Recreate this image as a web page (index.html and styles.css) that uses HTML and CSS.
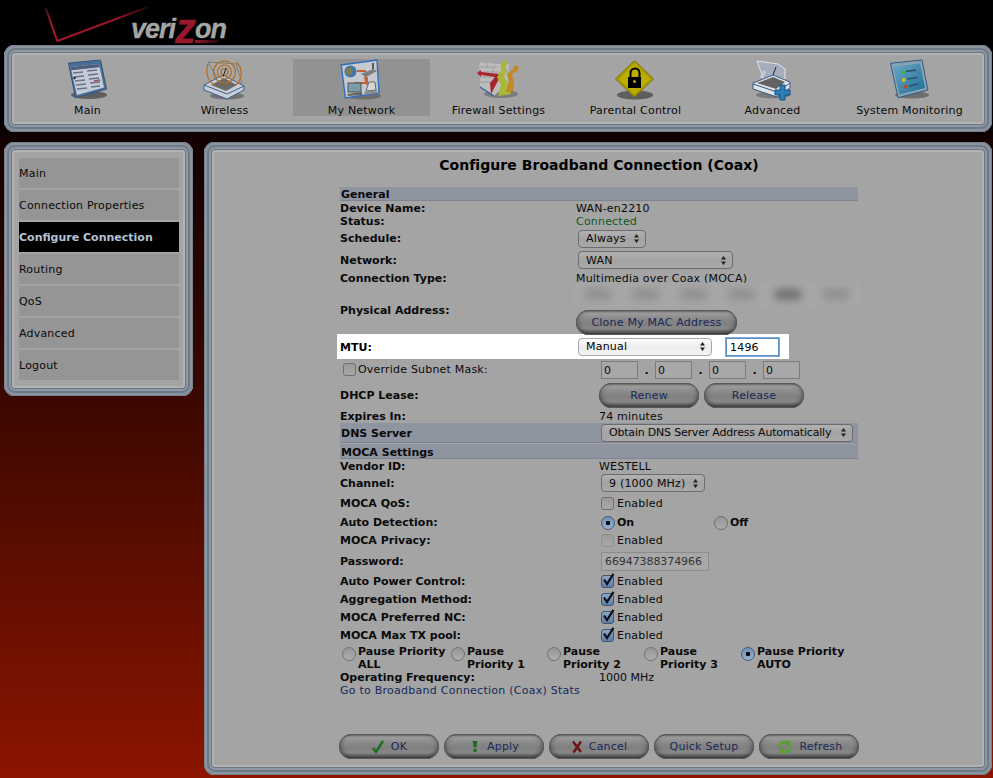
FILE: index.html
```html
<!DOCTYPE html>
<html lang="en">
<head>
<meta charset="utf-8">
<title>Configure Broadband Connection (Coax)</title>
<link rel="stylesheet" href="styles.css">
</head>
<body>
<svg class="defs" width="0" height="0" aria-hidden="true">
  <defs>
    <symbol id="updn" viewBox="0 0 7 11"><path d="M3.5 1 6 4.4H1zM3.5 10 1 6.6h5z" fill="#222"/></symbol>
    <symbol id="tick" viewBox="0 0 14 14"><path d="M3 6.5 6 11 12.5 .8" fill="none" stroke="#0c0f14" stroke-width="2.2"/></symbol>
    <linearGradient id="skyblue" x1="0" y1="0" x2="1" y2="1"><stop offset="0" stop-color="#6ba7c4"/><stop offset="1" stop-color="#1f6f96"/></linearGradient>
    <linearGradient id="vg" gradientUnits="userSpaceOnUse" x1="13" y1="41" x2="104" y2="7"><stop offset="0" stop-color="#a0162c"/><stop offset=".65" stop-color="#97162a"/><stop offset="1" stop-color="#1a0808"/></linearGradient>
    <linearGradient id="vl" gradientUnits="userSpaceOnUse" x1="13" y1="41" x2="1.700" y2="8"><stop offset="0" stop-color="#a0162c"/><stop offset=".6" stop-color="#97162a"/><stop offset="1" stop-color="#2a1010"/></linearGradient>
  </defs>
</svg>
<header class="brand">
  <svg class="chevron" width="106" height="45" viewBox="0 0 106 45"><path d="M1.700 8 13.300 41" fill="none" stroke="url(#vl)" stroke-width="2.200"/><path d="M12.600 41.200 104 7" fill="none" stroke="url(#vg)" stroke-width="2.200"/></svg>
  <div class="word">veri<span class="zed">z</span>on</div>
</header>

<nav class="frame topnav">
  <a class="tab">
    <svg width="44" height="42" viewBox="0 0 44 42"><ellipse cx="23" cy="36" rx="18" ry="4" fill="#5f5f5f"/><path d="M2.5 4 34.5 1 40.5 30 9.5 39Z" fill="#4a6f97" stroke="#33557c"/><path d="M4.5 8 33 5 38 28.5 11 36Z" fill="#c5cbd6"/><path d="M4.5 8 33 5 33.7 8.3 5.2 11.3Z" fill="#4f5e80"/><path d="M7 14 17 13M8 18 18 17M9 22 19 21M10 26 20 25M11 30 21 29M21 12 31 11M22 16 32 15M23 20 33 19M24 24 34 23M25 28 34 27" stroke="#68728a" stroke-width="1.4"/><circle cx="8.5" cy="19" r="1.2" fill="#222"/><path d="M28 22 34 21" stroke="#a05050" stroke-width="1.4"/></svg>
    <span>Main</span>
  </a>
  <a class="tab">
    <svg width="44" height="42" viewBox="0 0 44 42"><ellipse cx="24" cy="37" rx="17" ry="3.5" fill="#727272"/><path d="M5 3 33 5 39 24 19 27Z" fill="#a9a9a9" stroke="#7d7d7d"/><path d="M1 26 20 16 41 27 41 31 24 40 1 31Z" fill="#c9ced6" stroke="#3a5f8f"/><path d="M1 26 24 35 41 27" fill="none" stroke="#3a5f8f"/><path d="M8 26 21 19 34 26 23 32Z" fill="#6a6a6a"/><g fill="none" stroke="#b86b1e" stroke-width="1.2"><circle cx="21.5" cy="13" r="3.5"/><circle cx="21.5" cy="13" r="7"/><circle cx="21.5" cy="13" r="11"/><path d="M5 5C2 14 5 23 13 27M33 3C40 9 40 19 33 26"/></g><path d="M20 18 23 9" stroke="#222"/></svg>
    <span>Wireless</span>
  </a>
  <a class="tab active">
    <svg width="44" height="42" viewBox="0 0 44 42"><ellipse cx="24" cy="37" rx="17" ry="3.5" fill="#6d6d6d"/><path d="M1.2 6 37 1 39 34 5.500 39Z" fill="#c4c9cf" stroke="#2f6fc0" stroke-width="1.4"/><path d="M17 12H26M25 17 26 24 15 24 15 26M27 18V26" fill="none" stroke="#c4602f" stroke-width="1.8"/><circle cx="10.500" cy="12.500" r="6" fill="#3b77a9"/><path d="M6 10C8 8 11 8 12 10S13 14 10 16 6 14 6 10Z" fill="#7f7f4f"/><path d="M21 15 33 10 37 12 26 18Z" fill="#7d7d7d"/><path d="M33 4V10" stroke="#333" stroke-width="1.500"/><rect x="8" y="24" width="13" height="9" fill="#7b9ba6" stroke="#555"/><path d="M7 35 22 33 22 36 8 37Z" fill="#666"/><path d="M26 32 29 23 35 23 36 31Z" fill="#d5d5d5" stroke="#666"/><path d="M24 33 37 31 37 34 25 36Z" fill="#8b8b8b"/></svg>
    <span>My Network</span>
  </a>
  <a class="tab">
    <svg width="44" height="42" viewBox="0 0 44 42"><ellipse cx="24" cy="35" rx="17" ry="4" fill="#7d7d7d"/><path d="M2.500 3 20 5 32 5 31 24 17 37 3 28Z" fill="#bcbcbc"/><path d="M3 8H20M3 13H22M3 18H18M3 23H14M10 3V8M16 8V13M8 13V18M25 5V12M30 10V16" stroke="#9c9c9c"/><path d="M3 28 17 37" stroke="#3a62a0" stroke-width="1.400"/><path d="M14 35 22 20 22 15 4 13 4 11 0 14 4 18 4 16 18 18 13 24Z" fill="#a9242c"/><path d="M21 37 24 26 20 18 25 10 23 8 27 0 31 6 29 6 29 12 27 18 31 24 34 35Z" fill="#a9b936"/><path d="M29 33 32 22 30 15 37 9 36 7 42 7 40 14 39 12 35 15 37 24 36 32Z" fill="#c08a26"/></svg>
    <span>Firewall Settings</span>
  </a>
  <a class="tab">
    <svg width="44" height="42" viewBox="0 0 44 42"><ellipse cx="21" cy="36" rx="18" ry="4.500" fill="#5e5e5e"/><path d="M20.500 1.500 39.500 20 20.500 38 1.500 20Z" fill="#a99c00" stroke="#7f7600"/><path d="M20.500 4.500 36 20 20.500 35 5 20Z" fill="#bcae00"/><path d="M16.500 18V14A4.500 4.500 0 0 1 25.500 14V18" fill="none" stroke="#000" stroke-width="2"/><rect x="14" y="18" width="13" height="11" fill="#000"/><circle cx="20.500" cy="22.500" r="1.500" fill="#b8a800"/></svg>
    <span>Parental Control</span>
  </a>
  <a class="tab">
    <svg width="44" height="42" viewBox="0 0 44 42"><ellipse cx="22" cy="36" rx="17" ry="3.500" fill="#7a7a7a"/><path d="M6 2 27 5 34 10 34 20 13 21Z" fill="#a4aebc" stroke="#e0e4ea"/><path d="M14 12 10 19" stroke="#c3ccd7" stroke-width="3"/><path d="M25 8 22 16" stroke="#222"/><path d="M2 24 22 16 39 23 39 29 26 38 2 30Z" fill="#dfe3e8" stroke="#36588a"/><path d="M6 24 22 18 34 23 25 30Z" fill="#626262"/><path d="M2 25 26 33 39 24" fill="none" stroke="#36588a"/><path d="M29 26H34V31H39V36H34V41H29V36H24V31H29Z" fill="#2b7fb5" stroke="#0f5289"/></svg>
    <span>Advanced</span>
  </a>
  <a class="tab">
    <svg width="44" height="42" viewBox="0 0 44 42"><ellipse cx="24" cy="36" rx="17" ry="3.500" fill="#6e6e6e"/><path d="M2.500 4.300 34 1 39.800 31 10 38.700Z" fill="#8aa2b4" stroke="#335a82"/><path d="M5 7.500 32 4.500 37 29 11.500 35.500Z" fill="url(#skyblue)"/><circle cx="14.800" cy="13.300" r="1.900" fill="#39b24a"/><circle cx="15.800" cy="21" r="1.900" fill="#cfc41f"/><circle cx="17.500" cy="27.700" r="1.900" fill="#c4472b"/><path d="M18 12.500 28 11M19 20 29 18.500M21 27 30 25" stroke="#2a4f66" stroke-width="1.500"/></svg>
    <span>System Monitoring</span>
  </a>
</nav>

<div class="lower">
  <aside class="frame side">
    <a class="side-item">Main</a>
    <a class="side-item">Connection Properties</a>
    <a class="side-item current">Configure Connection</a>
    <a class="side-item">Routing</a>
    <a class="side-item">QoS</a>
    <a class="side-item">Advanced</a>
    <a class="side-item">Logout</a>
  </aside>

  <main class="frame content">
    <h1>Configure Broadband Connection (Coax)</h1>
    <form class="form">
      <div class="bar h14 after1">General</div>
      <div class="row h13"><b class="lab">Device Name:</b><span>WAN-en2210</span></div>
      <div class="row h13"><b class="lab">Status:</b><span class="ok">Connected</span></div>
      <div class="row h21"><b class="lab">Schedule:</b><span class="sel s-sched">Always<svg class="ud"><use href="#updn"/></svg></span></div>
      <div class="row h22"><b class="lab">Network:</b><span class="sel s-net">WAN<svg class="ud"><use href="#updn"/></svg></span></div>
      <div class="row h14"><b class="lab">Connection Type:</b><span>Multimedia over Coax (MOCA)</span></div>
      <div class="row h49"><b class="lab low">Physical Address:</b>
        <div class="mac">
          <div class="blurbox"><i></i><i></i><i></i><i></i><i class="dk"></i><i></i></div>
          <span class="pill p-clone">Clone My MAC Address</span>
        </div>
      </div>
      <div class="row h25 mtu"><b class="lab low">MTU:</b><span class="sel s-mtu">Manual<svg class="ud"><use href="#updn"/></svg></span><span class="inp focus">1496</span></div>
      <div class="row h22"><label class="lab ovr"><span class="cb"></span>Override Subnet Mask:</label>
        <div class="ip"><span class="inp">0</span><b>.</b><span class="inp">0</span><b>.</b><span class="inp">0</span><b>.</b><span class="inp">0</span></div>
      </div>
      <div class="row h28"><b class="lab w259">DHCP Lease:</b><div class="dhcp"><span class="pill p-mid">Renew</span><span class="pill p-mid">Release</span></div></div>
      <div class="row h14"><b class="lab w259">Expires In:</b><span>74 minutes</span></div>
      <div class="bar h20 dns"><span class="w259 dns-t">DNS Server</span><span class="sel s-dns">Obtain DNS Server Address Automatically<svg class="ud"><use href="#updn"/></svg></span></div>
      <div class="bar h14 gap1">MOCA Settings</div>
      <div class="row h14"><b class="lab w259">Vendor ID:</b><span>WESTELL</span></div>
      <div class="row h20"><b class="lab w261">Channel:</b><span class="sel s-chan">9 (1000 MHz)<svg class="ud"><use href="#updn"/></svg></span></div>
      <div class="row h19 dn"><b class="lab w261">MOCA QoS:</b><span class="cb"></span><span class="en">Enabled</span></div>
      <div class="row h19 dn"><b class="lab w261">Auto Detection:</b><span class="rd on"></span><b class="opt opt-on">On</b><span class="rd"></span><b class="opt">Off</b></div>
      <div class="row h19"><b class="lab w261">MOCA Privacy:</b><span class="cb dis"></span><span class="en">Enabled</span></div>
      <div class="row h21 dn"><b class="lab w261">Password:</b><span class="inp pw">66947388374966</span></div>
      <div class="row h19 dn"><b class="lab w261">Auto Power Control:</b><span class="cb chk"><svg class="tk"><use href="#tick"/></svg></span><span class="en">Enabled</span></div>
      <div class="row h18"><b class="lab w261">Aggregation Method:</b><span class="cb chk"><svg class="tk"><use href="#tick"/></svg></span><span class="en">Enabled</span></div>
      <div class="row h18"><b class="lab w261">MOCA Preferred NC:</b><span class="cb chk"><svg class="tk"><use href="#tick"/></svg></span><span class="en">Enabled</span></div>
      <div class="row h18"><b class="lab w261">MOCA Max TX pool:</b><span class="cb chk"><svg class="tk"><use href="#tick"/></svg></span><span class="en">Enabled</span></div>
      <div class="pauses">
        <div class="pz z1"><span class="rd"></span><b>Pause Priority<br>ALL</b></div>
        <div class="pz z3"><span class="rd"></span><b>Pause<br>Priority 1</b></div>
        <div class="pz z2"><span class="rd"></span><b>Pause<br>Priority 2</b></div>
        <div class="pz z2"><span class="rd"></span><b>Pause<br>Priority 3</b></div>
        <div class="pz"><span class="rd on"></span><b>Pause Priority<br>AUTO</b></div>
      </div>
      <div class="row h13"><b class="lab w259">Operating Frequency:</b><span class="tight">1000 MHz</span></div>
      <div class="row h13"><a class="statlink">Go to Broadband Connection (Coax) Stats</a></div>
    </form>
    <div class="actions">
      <span class="pill act"><svg width="14" height="14" viewBox="0 0 14 14"><path d="M2 8 5 12 12 1" fill="none" stroke="#19721b" stroke-width="2.400"/></svg>OK</span>
      <span class="pill act"><svg width="12" height="14" viewBox="0 0 12 14"><path d="M3.500 1H8.500L7.300 7.500H4.700ZM4.500 9H7.500V12H4.500Z" fill="#1b6d1b"/></svg>Apply</span>
      <span class="pill act"><svg width="12" height="14" viewBox="0 0 12 14"><path d="M2 1.500 10 12M10 1.500 2.500 12.500" fill="none" stroke="#6f1414" stroke-width="2.400"/></svg>Cancel</span>
      <span class="pill act">Quick Setup</span>
      <span class="pill act"><svg width="18" height="18" viewBox="0 0 18 18"><path d="M2 9A7 7 0 0 1 13 3.500L14.500 2 15 8 9.500 7.500 11 6A4 4 0 0 0 5 9ZM16 9A7 7 0 0 1 5 14.500L3.500 16 3 10 8.500 10.500 7 12A4 4 0 0 0 13 9Z" fill="#5d9c37"/></svg>Refresh</span>
    </div>
  </main>
</div>
</body>
</html>
```

FILE: styles.css
```css
* { box-sizing: border-box; }
html, body { margin: 0; height: 100%; }
body {
  width: 993px;
  height: 778px;
  overflow: hidden;
  font: 11px/13px "DejaVu Sans", Verdana, sans-serif;
  letter-spacing: .2px;
  color: #0a0a0a;
  background: linear-gradient(#000 0, #000 120px, #120100 140px, #3b0800 400px, #8c1500 778px);
}
b { letter-spacing: 0; }
.defs { position: absolute; }

/* Brand */
.brand { height: 45px; display: flex; }
.chevron { margin-left: 44px; flex: none; }
.word {
  margin: 14px 0 0 -19px;
  font: italic bold 27px/30px "Liberation Sans", Arial, sans-serif;
  color: #a6a6a6;
  letter-spacing: -1px;
  -webkit-text-stroke: .3px #a6a6a6;
  white-space: nowrap;
}
.zed {
  position: relative;
  color: #97182c;
  -webkit-text-stroke: .3px #97182c;
  font-size: 42px;
  line-height: 0;
  vertical-align: -5px;
}
.zed::after {
  content: "";
  position: absolute;
  left: 20px;
  bottom: 9px;
  width: 24px;
  height: 3px;
  background: linear-gradient(90deg, #97182c, #1a0606);
}

/* Frames */
.frame {
  background: #a4a4a4;
  border-radius: 11px;
  box-shadow:
    inset 0 0 0 1px #77818c,
    inset 0 0 0 3px #8a95a1,
    inset 0 0 0 5px #6f7a87,
    inset 0 0 0 7px #8d98a4,
    inset 0 0 0 8px #6c7784,
    inset 0 0 0 10px #b2b2b2;
}

/* Top navigation */
.topnav {
  height: 87px;
  margin: 0 1px 0 4px;
  padding: 14px 0 0 15px;
  display: flex;
}
.tab {
  width: 137px;
  height: 57px;
  flex: none;
  display: flex;
  flex-direction: column;
  align-items: center;
}
.tab svg { flex: none; display: block; }
.tab span { margin-top: 3px; line-height: 13px; white-space: nowrap; }
.tab.active { background: #929292; }

/* Lower */
.lower { display: flex; margin: 10px 1px 0 4px; align-items: flex-start; gap: 11px; }
.side {
  width: 189px;
  height: 254px;
  flex: none;
  padding: 16px 14px 0 15px;
  display: flex;
  flex-direction: column;
  gap: 2px;
}
.side-item {
  height: 30px;
  background: #959595;
  line-height: 32px;
  white-space: nowrap;
}
.side-item.current { background: #000; color: #b4c1d0; font-weight: bold; letter-spacing: 0; }

.content {
  flex: 1;
  height: 633px;
  padding: 15px 0 0 136px;
  display: flex;
  flex-direction: column;
}
h1 {
  margin: 0 0 14px;
  font-size: 14px;
  line-height: 16px;
  font-weight: bold;
  letter-spacing: .05px;
  width: 518px;
  text-align: center;
  white-space: nowrap;
  color: #000;
}
.form { width: 518px; }

/* Rows */
.h13 { height: 13px; }
.h14 { height: 14px; }
.h18 { height: 18px; }
.h19 { height: 19px; }
.h20 { height: 20px; }
.h21 { height: 21px; }
.h22 { height: 22px; }
.h25 { height: 25px; }
.h28 { height: 28px; }
.h49 { height: 49px; }

.row { display: flex; align-items: center; white-space: nowrap; }
.dn { padding-top: 2px; }
.lab { width: 236px; flex: none; font-weight: bold; letter-spacing: 0; }
.low { padding-top: 2px; }
.w259 { width: 259px; flex: none; }
.w261 { width: 261px; flex: none; }
.ok { color: #0c5a1c; }
.tight { letter-spacing: 0; }

.bar {
  background: #8f94a1;
  border-bottom: 1px solid #7f8490;
  font-weight: bold;
  letter-spacing: 0;
  padding: 1px 0 0 1px;
  line-height: 13px;
  display: flex;
  align-items: flex-start;
}
.after1 { margin-bottom: 1px; }
.gap1 { margin-top: 1px; height: 15px; padding-top: 2px; }
.dns { padding: 0 0 0 1px; align-items: center; }
.dns-t { width: 260px; padding-top: 2px; }

/* Controls */
.sel {
  display: flex;
  align-items: center;
  justify-content: space-between;
  height: 18px;
  margin-left: 2px;
  padding: 0 5px 0 7px;
  border: 1px solid #6c6c6c;
  border-radius: 4px;
  background: linear-gradient(#b1b1b1, #a3a3a3 50%, #a8a8a8);
  font-weight: normal;
  letter-spacing: .2px;
  white-space: nowrap;
}
.ud { width: 7px; height: 11px; flex: none; }
.s-sched { width: 68px; }
.s-net { width: 155px; }
.s-mtu { width: 134px; background: linear-gradient(#fff, #ececec 50%, #f6f6f6); border-color: #a8a8a8; }
.s-dns { width: 252px; margin-left: 0; letter-spacing: -.2px; }
.s-chan { width: 104px; margin-left: 0; }

.mtu { background: #fff; margin-left: -3px; width: 452px; padding-left: 3px; color: #000; }
.inp {
  display: block;
  height: 18px;
  border: 1px solid #7c7c7c;
  background: #a8a8a8;
  padding-left: 2px;
  line-height: 18px;
}
.focus {
  width: 53px;
  margin-left: 14px;
  background: #fff;
  border: 1px solid #5a8fc7;
  box-shadow: 0 0 0 1px #7fa9d6;
  padding-left: 3px;
}
.ovr { font-weight: normal; letter-spacing: .2px; padding: 0 0 2px 3px; display: flex; align-items: center; width: 261px; }
.ip { display: flex; align-items: center; }
.ip .inp { width: 37px; }
.ip b { width: 17px; text-align: center; }
.mac { width: 282px; margin-top: -2px; }
.blurbox {
  height: 24px;
  width: 286px;
  margin-left: -2px;
  background: #a7a7a7;
  display: flex;
  justify-content: space-around;
  align-items: center;
  overflow: hidden;
}
.blurbox i { width: 26px; height: 11px; background: #8f8f8f; filter: blur(4px); }
.blurbox i.dk { background: #6f6f6f; }
.pill {
  display: flex;
  align-items: center;
  justify-content: center;
  height: 25px;
  border-radius: 13px;
  color: #1a2a5a;
  background: linear-gradient(#5e5e5e 0, #9e9e9e 12%, #8e8e8e 30%, #7f7f7f 55%, #8a8a8a 75%, #4f4f4f 100%);
  box-shadow: inset 0 0 0 1px #5a5a5a, inset 0 -3px 4px rgba(0, 0, 0, .3), inset 3px 0 4px rgba(0, 0, 0, .15), inset -3px 0 4px rgba(0, 0, 0, .15);
  white-space: nowrap;
}
.p-clone { width: 161px; margin-top: 3px; }
.dhcp { display: flex; gap: 5px; }
.p-mid { width: 100px; height: 25px; }

.cb {
  flex: none;
  width: 13px;
  height: 13px;
  border: 1px solid #6f6f6f;
  border-radius: 3px;
  background: linear-gradient(#9b9b9b, #a8a8a8);
  position: relative;
  margin-right: 2px;
}
.cb.dis { border-color: #909090; }
.cb.chk { background: linear-gradient(#8aa6c6, #5e7fa7); border-color: #40556f; }
.tk { position: absolute; left: -1px; top: -3px; width: 14px; height: 14px; }
.en { margin-left: 1px; }
.rd {
  flex: none;
  width: 14px;
  height: 14px;
  border: 1px solid #727272;
  border-radius: 50%;
  background: linear-gradient(#959595, #adadad);
  position: relative;
}
.rd.on { background: radial-gradient(circle, #0a0a0a 0 2px, transparent 2.500px), linear-gradient(#6f8fb4, #96b1d0); border-color: #465b76; }
.opt { margin-left: 2px; font-weight: bold; }
.opt-on { width: 97px; }
.pw { width: 108px; color: #333; padding-left: 3px; height: 19px; border-color: #8c8c8c; letter-spacing: -.08px; }

.pauses { display: flex; height: 26px; margin-top: 1px; padding-left: 2px; }
.pz { display: flex; flex: none; align-items: flex-start; white-space: nowrap; }
.pz .rd { margin-top: 2px; margin-right: 2px; }
.z1 { width: 109px; }
.z2 { width: 97px; }
.z3 { width: 96px; }
.pz b { line-height: 13px; }
.statlink { color: #162a58; letter-spacing: .25px; }

.actions {
  display: flex;
  gap: 5px;
  margin: 37px 0 0 -1px;
}
.act { width: 100px; gap: 6px; flex: none; }
.act svg { flex: none; }
```
